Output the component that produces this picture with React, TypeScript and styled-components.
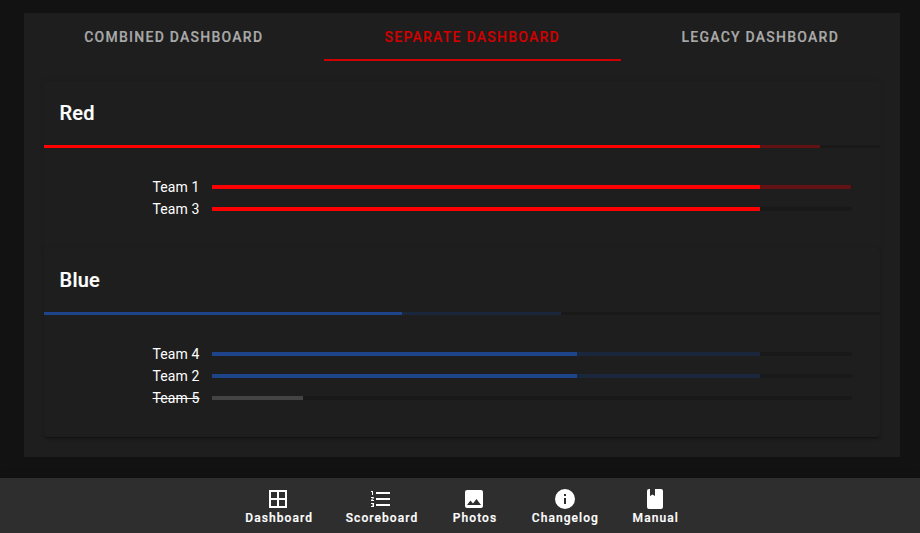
import React from 'react';
import styled, { createGlobalStyle } from 'styled-components';

const GlobalStyle = createGlobalStyle`
  *, *::before, *::after { box-sizing: border-box; }
  html, body { margin: 0; height: 100%; overflow: hidden; background: #121212; }
  body { font-family: Roboto, sans-serif; color: #fff; }
`;

const Page = styled.div`
  display: flex;
  flex-direction: column;
  height: 533px;
  padding-top: 13px;
  background: #121212;
`;

const Panel = styled.main`
  height: 444px;
  margin: 0 20px 21px 24px;
  flex: none;
  background: #1e1e1e;
`;

const Tabs = styled.nav`
  display: grid;
  grid-template-columns: 300px 297px 279px;
  height: 48px;
`;

const Tab = styled.button<{ $active?: boolean }>`
  border: 0;
  border-bottom: 2px solid ${p => (p.$active ? '#d10000' : 'transparent')};
  padding: 2px 16.5px 0 16px;
  background: none;
  color: ${p => (p.$active ? '#d10000' : 'rgba(255, 255, 255, 0.6)')};
  font: 500 14px/20px Roboto, sans-serif;
  letter-spacing: 0.0892857em;
  text-transform: uppercase;
  white-space: nowrap;
  -webkit-text-stroke: 0.15px currentColor;
`;

const Cards = styled.div`
  padding: 20px;
`;

const Card = styled.section`
  border-radius: 4px;
  background: #1e1e1e;
  box-shadow: 0 3px 1px -2px rgba(0, 0, 0, 0.2), 0 2px 2px 0 rgba(0, 0, 0, 0.14),
    0 1px 5px 0 rgba(0, 0, 0, 0.12);

  &:not(:last-child) {
    border-radius: 4px 4px 0 0;
    box-shadow: 0 0 5px 0 rgba(0, 0, 0, 0.12);
  }
`;

const CardTitle = styled.h2`
  margin: 0;
  padding: 16px 15.5px;
  font-size: 20px;
  font-weight: 500;
  line-height: 32px;
  letter-spacing: 0.0125em;
  -webkit-text-stroke: 0.2px currentColor;
`;

const Track = styled.div<{ $thick?: boolean }>`
  display: flex;
  height: ${p => (p.$thick ? 4 : 3)}px;
  background: #191919;
`;

const Fill = styled.div<{ $color: string }>`
  flex: none;
  background: ${p => p.$color};
`;

const Teams = styled.div`
  padding: 28px;
`;

const TeamRow = styled.div`
  display: grid;
  grid-template-columns: 127.5px 640px;
  column-gap: 12.5px;
  align-items: center;
  height: 22px;
`;

const TeamName = styled.span<{ $out?: boolean }>`
  justify-self: end;
  font-size: 14px;
  line-height: 22px;
  letter-spacing: 0.0071429em;
  text-decoration: ${p => (p.$out ? 'line-through' : 'none')};
`;

const BottomNav = styled.nav`
  display: flex;
  justify-content: center;
  gap: 0.75px;
  flex: none;
  height: 56px;
  padding-left: 5px;
  background: #2e2e2e;
  box-shadow: 0 2px 4px -1px rgba(0, 0, 0, 0.2), 0 4px 5px 0 rgba(0, 0, 0, 0.14),
    0 1px 10px 0 rgba(0, 0, 0, 0.12);
`;

const NavItem = styled.button`
  display: flex;
  flex-direction: column;
  align-items: center;
  min-width: 80px;
  padding: 9px 16px 0;
  border: 0;
  background: none;
  color: #fff;
  font: 500 12px/14px Roboto, sans-serif;
  letter-spacing: 0.0892857em;
  -webkit-text-stroke: 0.2px currentColor;
`;

const Icon = styled.svg`
  width: 24px;
  height: 24px;
  margin-right: 1.4px;
  fill: currentColor;
`;

interface Progress {
  value: number;
  buffer: number;
}
interface Team extends Progress {
  name: string;
  out?: boolean;
}
interface Side extends Progress {
  title: string;
  color: string;
  tint: string;
  teams: Team[];
}

const sides: Side[] = [
  {
    title: 'Red', color: '#ff0000', tint: '#621212', value: 716, buffer: 776,
    teams: [
      { name: 'Team 1', value: 548, buffer: 639 },
      { name: 'Team 3', value: 548, buffer: 548 },
    ],
  },
  {
    title: 'Blue', color: '#1e4489', tint: '#1a263b', value: 358, buffer: 517,
    teams: [
      { name: 'Team 4', value: 365, buffer: 548 },
      { name: 'Team 2', value: 365, buffer: 548 },
      { name: 'Team 5', value: 91, buffer: 91, out: true },
    ],
  },
];

const navItems = [
  { label: 'Dashboard', path: 'M19,11H13V5H19M19,19H13V13H19M11,11H5V5H11M11,19H5V13H11M3,21H21V3H3V21Z' },
  { label: 'Scoreboard', path: 'M7,13V11H21V13H7M7,19V17H21V19H7M7,7V5H21V7H7M3,8V5H2V4H4V8H3M2,17V16H5V20H2V19H4V18.5H3V17.5H4V17H2M4.25,10A0.75,0.75 0 0,1 5,10.75C5,10.95 4.92,11.14 4.79,11.27L3.12,13H5V14H2V13.08L4,11H2V10H4.25Z' },
  { label: 'Photos', path: 'M8.5,13.5L11,16.5L14.5,12L19,18H5M21,19V5C21,3.89 20.1,3 19,3H5A2,2 0 0,0 3,5V19A2,2 0 0,0 5,21H19A2,2 0 0,0 21,19Z' },
  { label: 'Changelog', path: 'M13,9H11V7H13M13,17H11V11H13M12,2A10,10 0 0,0 2,12A10,10 0 0,0 12,22A10,10 0 0,0 22,12A10,10 0 0,0 12,2Z' },
  { label: 'Manual', path: 'M18,22A2,2 0 0,0 20,20V4C20,2.89 19.1,2 18,2H12V9L9.5,7.5L7,9V2H6A2,2 0 0,0 4,4V20A2,2 0 0,0 6,22H18Z' },
];

function Bar({ value, buffer, color, tint, thick }: Progress & { color: string; tint: string; thick?: boolean }) {
  return (
    <Track $thick={thick}>
      <Fill $color={color} style={{ width: value }} />
      <Fill $color={tint} style={{ width: buffer - value }} />
    </Track>
  );
}

export default function App() {
  return (
    <>
      <GlobalStyle />
      <Page>
        <Panel>
          <Tabs>
            <Tab>Combined Dashboard</Tab>
            <Tab $active>Separate Dashboard</Tab>
            <Tab>Legacy Dashboard</Tab>
          </Tabs>
          <Cards>
            {sides.map(side => (
              <Card key={side.title}>
                <CardTitle>{side.title}</CardTitle>
                <Bar value={side.value} buffer={side.buffer} color={side.color} tint={side.tint} />
                <Teams>
                  {side.teams.map(team => (
                    <TeamRow key={team.name}>
                      <TeamName $out={team.out}>{team.name}</TeamName>
                      <Bar
                        thick
                        value={team.value}
                        buffer={team.buffer}
                        color={team.out ? '#444444' : side.color}
                        tint={side.tint}
                      />
                    </TeamRow>
                  ))}
                </Teams>
              </Card>
            ))}
          </Cards>
        </Panel>
        <BottomNav>
          {navItems.map(item => (
            <NavItem key={item.label}>
              <Icon viewBox="0 0 24 24"><path d={item.path} /></Icon>
              {item.label}
            </NavItem>
          ))}
        </BottomNav>
      </Page>
    </>
  );
}
